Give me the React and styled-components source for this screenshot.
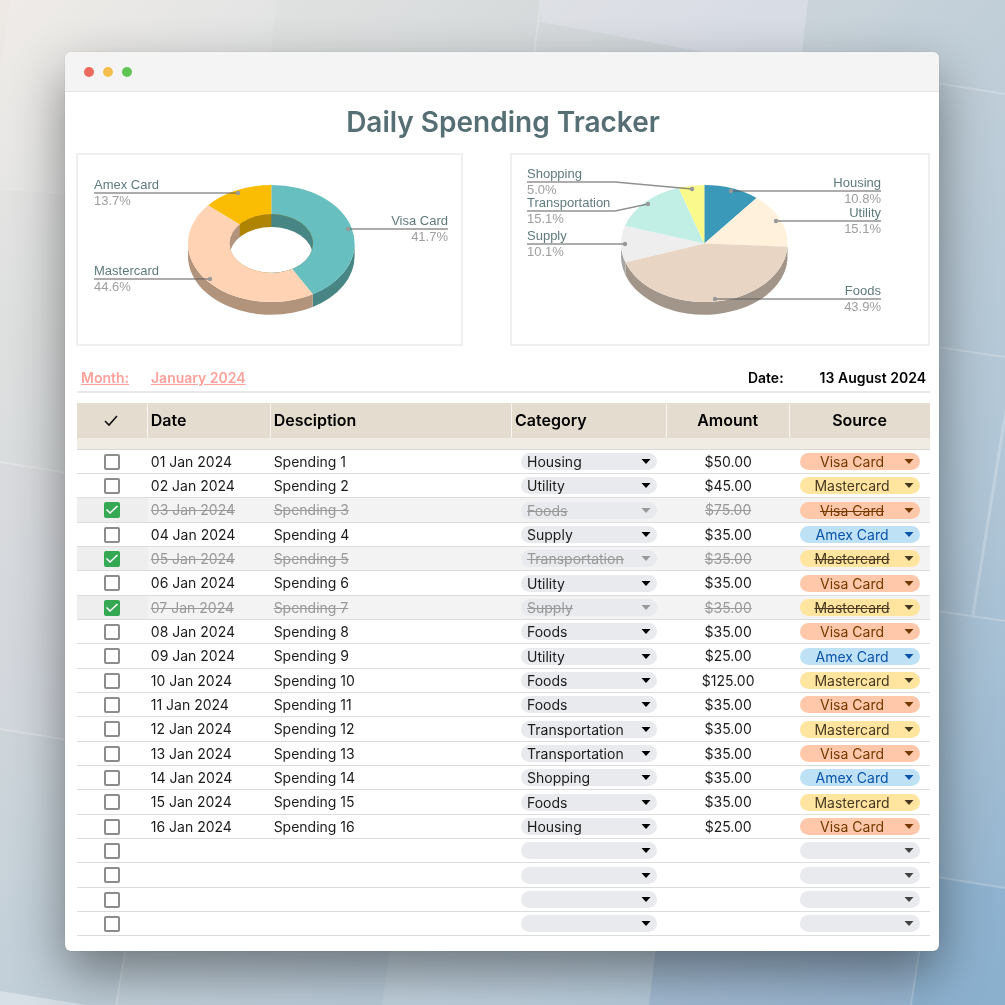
import React, { useState } from 'react'
import styled, { createGlobalStyle } from 'styled-components'

const expenses = [
  ['01 Jan 2024', 'Housing', '$50.00', 'Visa Card'],
  ['02 Jan 2024', 'Utility', '$45.00', 'Mastercard'],
  ['03 Jan 2024', 'Foods', '$75.00', 'Visa Card', true],
  ['04 Jan 2024', 'Supply', '$35.00', 'Amex Card'],
  ['05 Jan 2024', 'Transportation', '$35.00', 'Mastercard', true],
  ['06 Jan 2024', 'Utility', '$35.00', 'Visa Card'],
  ['07 Jan 2024', 'Supply', '$35.00', 'Mastercard', true],
  ['08 Jan 2024', 'Foods', '$35.00', 'Visa Card'],
  ['09 Jan 2024', 'Utility', '$25.00', 'Amex Card'],
  ['10 Jan 2024', 'Foods', '$125.00', 'Mastercard'],
  ['11 Jan 2024', 'Foods', '$35.00', 'Visa Card'],
  ['12 Jan 2024', 'Transportation', '$35.00', 'Mastercard'],
  ['13 Jan 2024', 'Transportation', '$35.00', 'Visa Card'],
  ['14 Jan 2024', 'Shopping', '$35.00', 'Amex Card'],
  ['15 Jan 2024', 'Foods', '$35.00', 'Mastercard'],
  ['16 Jan 2024', 'Housing', '$25.00', 'Visa Card'],
].map(([date, category, amount, source, done], i) => ({
  date,
  description: `Spending ${i + 1}`,
  category,
  amount,
  source,
  done: !!done,
}))

const emptyRow = {
  date: '',
  description: '',
  category: '',
  amount: '',
  source: '',
  done: false,
}

const initialRows = [...expenses, emptyRow, emptyRow, emptyRow, emptyRow]

const categories = [
  'Housing',
  'Utility',
  'Foods',
  'Supply',
  'Transportation',
  'Shopping',
]

const sources = {
  'Visa Card': { background: '#ffc8aa', color: '#753800' },
  Mastercard: { background: '#ffe5a0', color: '#473821' },
  'Amex Card': { background: '#bfe1f6', color: '#0a53a8' },
}

const sourceSlices = [
  { value: 41.7, color: '#67bfbf', side: '#488585' },
  { value: 44.6, color: '#ffd3b3', side: '#b2947d' },
  { value: 13.7, color: '#fbbc04', side: '#b08403' },
]

const categorySlices = [
  { value: 10.8, color: '#3a98b9', side: '#286a81' },
  { value: 15.1, color: '#fff1dc', side: '#b2a89a' },
  { value: 43.9, color: '#e8d5c4', side: '#a29589' },
  { value: 10.1, color: '#eeeeee', side: '#a6a6a6' },
  { value: 15.1, color: '#c1efe5', side: '#87a7a0' },
  { value: 5.0, color: '#fafa8c', side: '#afaf62' },
]

const sourceLabels = [
  { name: 'Amex Card', share: '13.7%', x: 16, y: 38, dot: [160, 38] },
  { name: 'Mastercard', share: '44.6%', x: 16, y: 124, dot: [132, 124] },
  { name: 'Visa Card', share: '41.7%', x: 370, y: 74, dot: [270, 74], end: true },
]

const categoryLabels = [
  { name: 'Shopping', share: '5.0%', x: 15, y: 27, bend: 103, dot: [180, 34] },
  {
    name: 'Transportation',
    share: '15.1%',
    x: 15,
    y: 56,
    bend: 103,
    dot: [136, 49],
  },
  { name: 'Supply', share: '10.1%', x: 15, y: 89, dot: [113, 89] },
  { name: 'Housing', share: '10.8%', x: 369, y: 36, dot: [219, 36], end: true },
  { name: 'Utility', share: '15.1%', x: 369, y: 66, dot: [264, 66], end: true },
  { name: 'Foods', share: '43.9%', x: 369, y: 144, dot: [203, 144], end: true },
]

const RX = 83.3
const RY = 58.5
const DEPTH = 12.7

const pointAt = (cx, cy, deg, k = 1) => {
  const a = (deg * Math.PI) / 180
  return [cx + RX * k * Math.sin(a), cy - RY * k * Math.cos(a)]
}

const withAngles = (slices) => {
  let from = 0
  return slices.map((s) => {
    const start = from
    from += s.value * 3.6
    return { ...s, start, end: from }
  })
}

const Pie = ({ slices, cx, cy, hole = 0 }) => {
  const parts = withAngles(slices)
  const arc = ({ start, end }) => {
    const [x1, y1] = pointAt(cx, cy, start)
    const [x2, y2] = pointAt(cx, cy, end)
    return `M${cx} ${cy}L${x1} ${y1}A${RX} ${RY} 0 ${
      end - start > 180 ? 1 : 0
    } 1 ${x2} ${y2}Z`
  }
  // only the front half of the rim is visible
  const wall = ({ start, end }) => {
    const [x1, y1] = pointAt(cx, cy, Math.max(start, 90))
    const [x2, y2] = pointAt(cx, cy, Math.min(end, 270))
    return `M${x1} ${y1}A${RX} ${RY} 0 0 1 ${x2} ${y2}v${DEPTH}A${RX} ${RY} 0 0 0 ${x1} ${
      y1 + DEPTH
    }Z`
  }
  const holeX = pointAt(cx, cy, parts[parts.length - 1].start, hole)[0]

  return (
    <g>
      {parts
        .filter((p) => p.end > 90 && p.start < 270)
        .map((p) => (
          <path key={p.color} d={wall(p)} fill={p.side} />
        ))}
      {parts.map((p) => (
        <path key={p.color} d={arc(p)} fill={p.color} />
      ))}
      {hole > 0 && (
        <g clipPath='url(#hole)'>
          <clipPath id='hole'>
            <ellipse cx={cx} cy={cy} rx={RX * hole} ry={RY * hole} />
          </clipPath>
          <rect x={cx - RX} y={cy - RY} width={RX} height={RY * 2} fill={parts[1].side} />
          <rect x={holeX} y={cy - RY} width={RX} height={RY * 2} fill={parts[2].side} />
          <rect x={cx} y={cy - RY} width={RX} height={RY * 2} fill={parts[0].side} />
          <ellipse cx={cx} cy={cy + DEPTH} rx={RX * hole} ry={RY * hole} fill='#fff' />
        </g>
      )}
    </g>
  )
}

const Callout = ({ name, share, x, y, bend, dot, end }) => (
  <g textAnchor={end ? 'end' : 'start'}>
    <polyline
      points={`${x},${y} ${bend || x},${y} ${dot[0]},${dot[1]}`}
      fill='none'
      stroke='#636363'
      strokeOpacity='0.7'
      strokeWidth='1.3'
    />
    <circle cx={dot[0]} cy={dot[1]} r='2.2' fill='#999' />
    <text x={x} y={y - 4} fill='#5f7a7d'>
      {name}
    </text>
    <text x={x} y={y + 12} fill='#9e9e9e'>
      {share}
    </text>
  </g>
)

const Backdrop = () => (
  <StyledBackdrop viewBox='0 0 1005 1005' preserveAspectRatio='none' aria-hidden='true'>
    <defs>
      <linearGradient id='sky' x1='0' y1='0' x2='1' y2='1'>
        <stop offset='0' stopColor='#eee9e5' />
        <stop offset='0.12' stopColor='#e1e2e1' />
        <stop offset='0.3' stopColor='#d5d9db' />
        <stop offset='0.48' stopColor='#c3d0d9' />
        <stop offset='0.75' stopColor='#afc5d6' />
        <stop offset='1' stopColor='#8fb2cf' />
      </linearGradient>
    </defs>
    <rect width='1005' height='1005' fill='url(#sky)' />
    <path d='M10 0H277L252 205L0 190V70Z' fill='#fff' opacity='0.12' />
    <path d='M541 0H808L800 70L541 22Z' fill='#e6e7f2' opacity='0.45' />
    <path d='M0 464L65 474V740L0 729Z' fill='#d8d8e2' opacity='0.3' />
    <path d='M0 991L86 1005H0Z' fill='#fff' opacity='0.35' />
    <path d='M126 940H391L382 1005H116Z' fill='#fff' opacity='0.1' />
    <path d='M391 940H657L649 1005H382Z' fill='#fff' opacity='0.2' />
    <path d='M657 940H921L911 1005H649Z' fill='#9fb4d4' opacity='0.25' />
    <path d='M930 876L1005 888V1005H911Z' fill='#85aecd' opacity='0.5' />
    <g stroke='#fff' strokeOpacity='0.22' strokeWidth='2' fill='none'>
      <path d='M541 0L532 70M0 462L75 474M0 729L75 741' />
      <path d='M930 82L1005 94M930 346L1005 357M930 610L1005 621M930 876L1005 888' />
      <path d='M128 935L116 1005M922 935L911 1005' />
      <path d='M1006 410L973 615' strokeWidth='3' />
    </g>
  </StyledBackdrop>
)

const Arrow = () => (
  <svg viewBox='0 0 10 5' width='10' height='5' aria-hidden='true'>
    <path d='M0.5 0H9.5L5 5Z' fill='currentColor' />
  </svg>
)

const App = () => {
  const [rows, setRows] = useState(initialRows)

  const update = (index, change) => {
    setRows(rows.map((r, i) => (i === index ? { ...r, ...change } : r)))
  }

  return (
    <>
      <GlobalStyle />
      <Backdrop />
      <Page>
        <Window>
          <TitleBar>
            <Light color='#ed6a5e' />
            <Light color='#f4bf4f' />
            <Light color='#61c554' />
          </TitleBar>
          <Content>
            <Title>Daily Spending Tracker</Title>
            <Charts>
              <ChartCard>
                <Chart viewBox='0 0 383 189' role='img' aria-label='Spending by source'>
                  <Pie slices={sourceSlices} cx={193.3} cy={88.5} hole={0.5} />
                  {sourceLabels.map((l) => (
                    <Callout key={l.name} {...l} />
                  ))}
                </Chart>
              </ChartCard>
              <ChartCard>
                <Chart viewBox='0 0 416 189' role='img' aria-label='Spending by category'>
                  <Pie slices={categorySlices} cx={192.3} cy={88.5} />
                  {categoryLabels.map((l) => (
                    <Callout key={l.name} {...l} />
                  ))}
                </Chart>
              </ChartCard>
            </Charts>
            <Sheet>
              <Meta>
                <MonthLabel href='#month'>Month:</MonthLabel>
                <MonthLink href='#january'>January 2024</MonthLink>
                <Today>
                  <span>Date:</span>
                  <time dateTime='2024-08-13'>13 August 2024</time>
                </Today>
              </Meta>
              <Table>
                <colgroup>
                  <Col width='8.3%' />
                  <Col width='14.4%' />
                  <Col width='28.3%' />
                  <Col width='18.2%' />
                  <Col width='14.4%' />
                  <Col width='16.4%' />
                </colgroup>
                <thead>
                  <tr>
                    <Th $center aria-label='Done'>
                      <svg width='16' height='16' viewBox='0 0 16 16'>
                        <path d='M2 9L6 13L14 4' fill='none' stroke='#111' strokeWidth='1.6' />
                      </svg>
                    </Th>
                    <Th>Date</Th>
                    <Th>Desciption</Th>
                    <Th>Category</Th>
                    <Th $center>Amount</Th>
                    <Th $center>Source</Th>
                  </tr>
                  <tr>
                    <Spacer colSpan='6' />
                  </tr>
                </thead>
                <tbody>
                  {rows.map((row, i) => (
                    <Row key={i} $done={row.done}>
                      <td>
                        <CheckBox>
                          <input
                            type='checkbox'
                            aria-label={`Row ${i + 1} done`}
                            checked={row.done}
                            onChange={(e) => update(i, { done: e.target.checked })}
                          />
                          {row.done && (
                            <svg viewBox='0 0 16 16' aria-hidden='true'>
                              <path
                                d='M2.5 7.5L6 11L13.5 4'
                                fill='none'
                                stroke='#fff'
                                strokeWidth='1.6'
                              />
                            </svg>
                          )}
                        </CheckBox>
                      </td>
                      <td>{row.date}</td>
                      <td>{row.description}</td>
                      <td>
                        <CategoryPill $done={row.done}>
                          <select
                            aria-label={`Row ${i + 1} category`}
                            value={row.category}
                            onChange={(e) => update(i, { category: e.target.value })}
                          >
                            <option value=''></option>
                            {categories.map((c) => (
                              <option key={c}>{c}</option>
                            ))}
                          </select>
                          <Arrow />
                        </CategoryPill>
                      </td>
                      <Amount>{row.amount}</Amount>
                      <td>
                        <SourcePill $tone={sources[row.source]}>
                          <select
                            aria-label={`Row ${i + 1} source`}
                            value={row.source}
                            onChange={(e) => update(i, { source: e.target.value })}
                          >
                            <option value=''></option>
                            {Object.keys(sources).map((s) => (
                              <option key={s}>{s}</option>
                            ))}
                          </select>
                          <Arrow />
                        </SourcePill>
                      </td>
                    </Row>
                  ))}
                </tbody>
              </Table>
            </Sheet>
          </Content>
        </Window>
      </Page>
    </>
  )
}

const GlobalStyle = createGlobalStyle`
  * {
    box-sizing: border-box;
  }
  body {
    margin: 0;
    font-family: Inter, Roboto, sans-serif;
    font-size: 14px;
    color: #1b1b1b;
  }
`

const StyledBackdrop = styled.svg`
  position: fixed;
  inset: 0;
  width: 100%;
  height: 100%;
  z-index: -1;
`

const Page = styled.div`
  min-height: 100vh;
  padding: 52px 66px 54px 65px;
`

const Window = styled.main`
  background: #fff;
  border-radius: 6px;
  overflow: hidden;
  box-shadow: 0 22px 52px rgba(0, 0, 0, 0.44), 0 0 1px rgba(0, 0, 0, 0.3);
`

const TitleBar = styled.div`
  display: flex;
  align-items: center;
  gap: 9px;
  height: 40px;
  padding: 0 19px;
  background: #f4f4f4;
  border-bottom: 1px solid #e6e6e6;
`

const Light = styled.span`
  width: 10px;
  height: 10px;
  border-radius: 50%;
  background: ${({ color }) => color};
`

const Content = styled.div`
  padding: 8px 9px 15px 11px;
`

const Title = styled.h1`
  margin: 0 0 9px;
  font-size: 28px;
  line-height: 44px;
  font-weight: 600;
  text-align: center;
  color: #566f74;
`

const Charts = styled.div`
  display: grid;
  grid-template-columns: 387fr 420fr;
  gap: 47px;
`

const ChartCard = styled.section`
  border: 2px solid #efefef;
`

const Chart = styled.svg`
  display: block;
  width: 100%;
  height: auto;
  text {
    font-family: 'Liberation Sans', Arial, sans-serif;
    font-size: 13px;
  }
`

const Sheet = styled.section`
  padding: 18px 0 0 1px;
`

const Meta = styled.div`
  display: flex;
  align-items: center;
  height: 29px;
  margin: 0 0 10px;
  padding: 0 4px 1px;
  border-bottom: 2px solid #e8e8e8;
  font-weight: 600;
`

const MonthLabel = styled.a`
  width: 70px;
  color: #ffa19b;
`

const MonthLink = styled.a`
  color: #ffa19b;
`

const Today = styled.div`
  display: flex;
  gap: 36px;
  margin-left: auto;
  color: #000;
`

const Table = styled.table`
  width: 100%;
  table-layout: fixed;
  border-collapse: separate;
  border-spacing: 0;
`

const Col = styled.col`
  width: ${({ width }) => width};
`

const Th = styled.th`
  height: 35px;
  padding: 0 4px 2px 3px;
  background: #e4dccf;
  border-right: 1px solid #f7f4ef;
  text-align: ${({ $center }) => ($center ? 'center' : 'left')};
  font-size: 16px;
  font-weight: 600;
  color: #000;
  svg {
    display: block;
    margin: 0 auto;
  }
  &:last-child {
    border-right: 0;
  }
`

const Spacer = styled.td`
  height: 12px;
  padding: 0;
  background: #f0ebe3;
  border-bottom: 1px solid #d9d9d9;
`

const Row = styled.tr`
  background: ${({ $done }) => ($done ? '#f3f3f3' : 'transparent')};
  color: ${({ $done }) => ($done ? '#999' : 'inherit')};
  td {
    height: 24px;
    padding: 0 4px 0 3px;
    border-bottom: 1px solid #dcdcdc;
    line-height: 18px;
    white-space: nowrap;
    text-decoration: ${({ $done }) => ($done ? 'line-through' : 'none')};
  }
  td:first-child {
    background: ${({ $done }) => ($done ? '#eeeeee' : 'transparent')};
  }
  select {
    text-decoration: ${({ $done }) => ($done ? 'line-through' : 'none')};
  }
  &:nth-child(3n) td {
    height: 25px;
  }
`

const Amount = styled.td`
  text-align: center;
`

const CheckBox = styled.label`
  display: block;
  position: relative;
  width: 16px;
  height: 16px;
  margin: 0 auto;
  input {
    appearance: none;
    display: block;
    width: 16px;
    height: 16px;
    margin: 0;
    border: 2px solid #8c8c8c;
    border-radius: 2px;
    background: #fff;
  }
  input:checked {
    border-color: #34a853;
    background: #34a853;
  }
  svg {
    position: absolute;
    inset: 0;
    pointer-events: none;
  }
`

const Pill = styled.div`
  position: relative;
  height: 17px;
  border-radius: 9px;
  background: #e8eaed;
  select {
    appearance: none;
    display: block;
    width: 100%;
    height: 17px;
    margin: 0;
    padding: 0 16px 0 6px;
    border: 0;
    background: transparent;
    color: inherit;
    font: inherit;
    line-height: 17px;
  }
  svg {
    position: absolute;
    top: 6px;
    right: 6px;
    pointer-events: none;
  }
`

const CategoryPill = styled(Pill)`
  margin: 0 6px;
  svg {
    color: ${({ $done }) => ($done ? '#999' : '#000')};
  }
`

const SourcePill = styled(Pill)`
  margin: 0 6px 0 7px;
  background: ${({ $tone }) => ($tone ? $tone.background : '#e8eaed')};
  color: ${({ $tone }) => ($tone ? $tone.color : '#434343')};
  select {
    padding: 0 16px 0 0;
    text-align: center;
    text-align-last: center;
  }
`

export default App
